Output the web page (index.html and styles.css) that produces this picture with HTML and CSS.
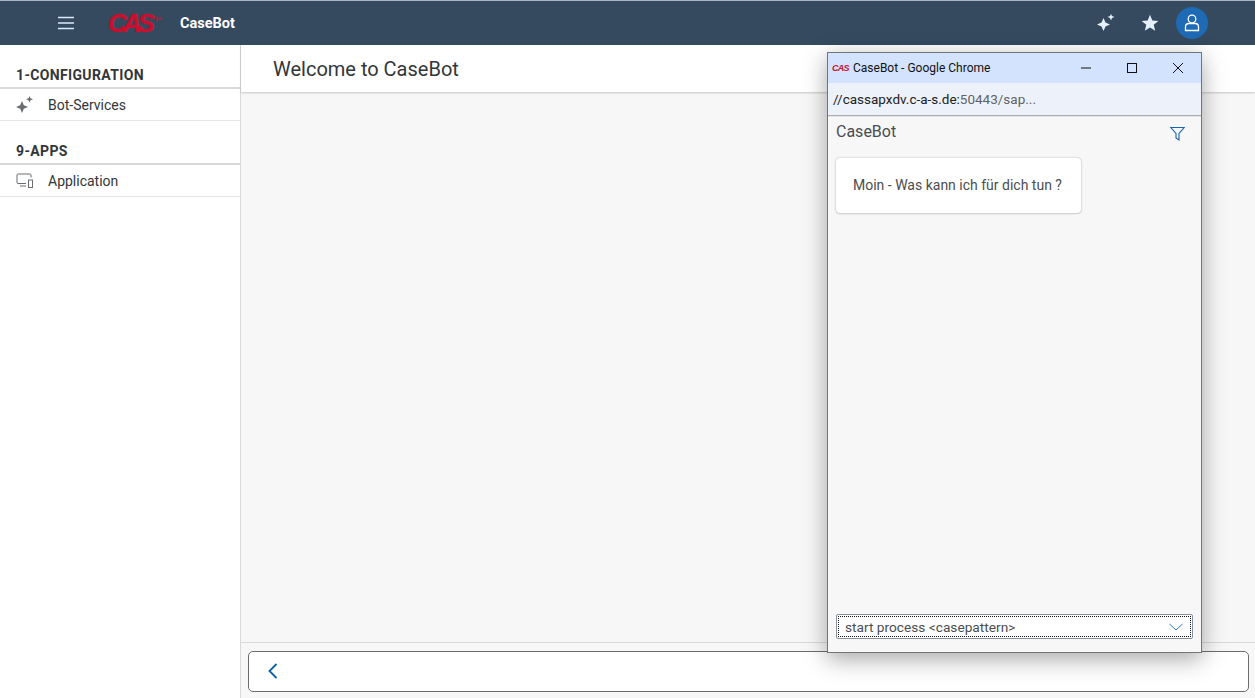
FILE: index.html
```html
<!DOCTYPE html>
<html lang="de">
<head>
<meta charset="utf-8">
<title>CaseBot</title>
<link rel="stylesheet" href="styles.css">
</head>
<body>
<div class="app">
  <header class="shell">
    <div class="shell-left">
      <svg class="burger" width="18" height="14" viewBox="0 0 18 14"><path d="M1 1.500h16M1 7h16M1 12.500h16" stroke="#d9eafa" stroke-width="1.600" fill="none"/></svg>
      <span class="logo">CAS<sup class="logo-sup">go</sup></span>
      <span class="app-title">CaseBot</span>
    </div>
    <div class="shell-right">
      <svg class="spark" width="18" height="18" viewBox="0 0 18 18"><path d="M6.500 4 8.500 8.500 13 10.500 8.500 12.500 6.500 17 4.500 12.500 0 10.500 4.500 8.500Z" fill="#e4f1fd"/><path d="M14 0 15 2 17.500 3 15 4 14 6.500 13 4 10.500 3 13 2Z" fill="#e4f1fd"/></svg>
      <svg class="star" width="18" height="18" viewBox="0 0 18 18"><path d="M9 .8 11.300 6.500 17.400 6.900 12.700 10.800 14.200 16.800 9 13.500 3.800 16.800 5.300 10.800.6 6.900 6.700 6.500Z" fill="#e4f1fd"/></svg>
      <div class="avatar">
        <svg width="16" height="18" viewBox="0 0 16 18"><circle cx="8" cy="5" r="3.800" fill="none" stroke="#fff" stroke-width="1.300"/><path d="M1.500 16.500V13c0-2 1.500-3.500 3.500-3.500h6c2 0 3.500 1.500 3.500 3.500v3.500Z" fill="none" stroke="#fff" stroke-width="1.300"/></svg>
      </div>
    </div>
  </header>
  <div class="body">
    <nav class="side">
      <h2 class="group">1-CONFIGURATION</h2>
      <div class="item">
        <svg class="item-icon" width="18" height="17" viewBox="0 0 18 17"><path d="M6 5 7.800 9.200 12 11 7.800 12.800 6 17 4.200 12.800 0 11 4.200 9.200Z" fill="#6a6d70"/><path d="M13.500 0 14.500 2.200 17 3.200 14.500 4.200 13.500 6.500 12.500 4.200 10 3.200 12.500 2.200Z" fill="#6a6d70"/></svg>
        <span>Bot-Services</span>
      </div>
      <h2 class="group group-next">9-APPS</h2>
      <div class="item">
        <svg class="item-icon" width="18" height="16" viewBox="0 0 18 16"><path d="M10 10.500H2a1 1 0 0 1-1-1V2a1 1 0 0 1 1-1h12a1 1 0 0 1 1 1v2.500M4 13h6" fill="none" stroke="#6a6d70"/><rect x="12.500" y="7" width="4" height="7.500" fill="none" stroke="#6a6d70"/></svg>
        <span>Application</span>
      </div>
    </nav>
    <main class="main">
      <div class="page-head">Welcome to CaseBot</div>
      <div class="page-content"></div>
      <div class="page-foot">
        <div class="foot-bar">
          <svg width="10" height="16" viewBox="0 0 10 16"><path d="M8.500 1 1.500 8 8.500 15" fill="none" stroke="#0a5fa8" stroke-width="1.800"/></svg>
        </div>
      </div>
    </main>
  </div>
</div>

<section class="popup">
  <div class="win-title">
    <span class="win-logo">CAS</span>
    <span class="win-name">CaseBot - Google Chrome</span>
    <div class="win-buttons">
      <svg width="10" height="10" viewBox="0 0 10 10"><path d="M0 5h10" stroke="#111" fill="none"/></svg>
      <svg width="10" height="10" viewBox="0 0 10 10"><rect x=".5" y=".5" width="9" height="9" stroke="#111" fill="none"/></svg>
      <svg width="10" height="10" viewBox="0 0 10 10"><path d="M0 0 10 10M10 0 0 10" stroke="#111" fill="none"/></svg>
    </div>
  </div>
  <div class="win-url"><span class="url-dark">//cassapxdv.c-a-s.de:</span><span class="url-light">50443/sap...</span></div>
  <div class="win-body">
    <div class="bot-head">
      <span>CaseBot</span>
      <svg width="15" height="15" viewBox="0 0 15 15"><path d="M.8 1.500h13.400L9 7.500V14L6 12V7.500Z" fill="none" stroke="#1a64b0" stroke-width="1.100"/></svg>
    </div>
    <div class="bubble">Moin - Was kann ich für dich tun ?</div>
    <div class="spacer"></div>
    <div class="select">
      <div class="select-inner">
        <span>start process &lt;casepattern&gt;</span>
        <svg width="14" height="8" viewBox="0 0 14 8"><path d="M.5 1 7 7 13.500 1" fill="none" stroke="#2a78c4" stroke-width="1"/></svg>
      </div>
    </div>
  </div>
</section>
</body>
</html>
```
FILE: styles.css
```css
* { box-sizing: border-box; }
html, body { margin: 0; height: 100%; }
body { font-family: Roboto, "Noto Sans", sans-serif; color: #32363a; background: #fff; overflow: hidden; }
.app { width: 1255px; height: 698px; display: flex; flex-direction: column; }
.shell { height: 45px; flex: none; background: #354a5f; border-top: 1px solid #a9b4be; display: flex; justify-content: space-between; align-items: center; padding: 0 47px 0 57px; }
.shell-left, .shell-right { display: flex; align-items: center; }
.burger { display: block; }
.logo { margin-left: 33px; width: 47px; font: italic bold 26px/1 "Liberation Sans", sans-serif; letter-spacing: -4px; color: #c8102e; -webkit-text-stroke: .4px #c8102e; white-space: nowrap; }
.logo-sup { font-size: 5px; letter-spacing: 0; vertical-align: 12px; line-height: 0; font-style: normal; -webkit-text-stroke: 0; margin-left: 4px; }
.app-title { margin-left: 25px; font-size: 14.500px; font-weight: 700; color: #fff; }
.spark { margin-right: 26px; }
.star { margin-right: 17px; }
.avatar { width: 32px; height: 32px; border-radius: 50%; background: #1f6ab5; display: flex; align-items: center; justify-content: center; }
.body { flex: 1; display: flex; min-height: 0; }
.side { width: 241px; flex: none; background: #fff; border-right: 1px solid #d9d9d9; }
.group { margin: 0; height: 44px; padding: 21px 16px 0; font-size: 14px; line-height: 18px; font-weight: 700; letter-spacing: .35px; color: #32363a; border-bottom: 2px solid #d9d9d9; }
.group-next { padding-top: 21px; }
.item { height: 32px; display: flex; align-items: center; padding-left: 16px; font-size: 14px; color: #32363a; border-bottom: 1px solid #e5e5e5; }
.item-icon { margin-right: 14px; flex: none; }
.main { flex: 1; display: flex; flex-direction: column; background: #f7f7f7; min-width: 0; }
.page-head { height: 47px; flex: none; background: #fff; padding-left: 32px; font-size: 20px; line-height: 48px; color: #32363a; box-shadow: 0 1px 2px rgba(0,0,0,.2); }
.page-content { flex: 1; }
.page-foot { height: 56px; flex: none; border-top: 1px solid #d9d9d9; padding: 8px 6px 7px 7px; }
.foot-bar { height: 41px; background: #fff; border: 1px solid #6a6d70; border-radius: 5px; display: flex; align-items: center; padding: 0 0 2px 19px; }
.popup { position: absolute; left: 827px; top: 52px; width: 375px; height: 601px; background: #f7f7f7; border: 1px solid #70757a; display: flex; flex-direction: column; box-shadow: 0 6px 22px rgba(0,0,0,.35); }
.win-title { height: 30px; flex: none; background: #d3e3fd; display: flex; align-items: center; padding-left: 4px; font-size: 12px; color: #111; }
.win-logo { width: 21px; font: italic bold 9px/1 "Liberation Sans", sans-serif; letter-spacing: -.8px; color: #c8102e; }
.win-buttons { margin-left: auto; display: flex; gap: 36px; padding-right: 18px; }
.win-url { height: 33px; flex: none; background: #edf2fa; border-bottom: 1px solid #a9adb5; padding-left: 5px; font-size: 13.500px; line-height: 32px; white-space: nowrap; }
.url-dark { color: #202124; }
.url-light { color: #5f6368; }
.win-body { flex: 1; display: flex; flex-direction: column; padding: 0 8px 13px 8px; min-height: 0; border-top: 1px solid #e3e3e3; }
.bot-head { height: 41px; flex: none; display: flex; justify-content: space-between; align-items: flex-start; font-size: 16px; line-height: 30px; color: #4a4d50; padding-right: 8px; }
.bot-head svg { margin-top: 9px; }
.bubble { width: 245px; height: 55px; flex: none; background: #fff; border-radius: 4px; box-shadow: 0 0 2px rgba(0,0,0,.3), 0 1px 2px rgba(0,0,0,.1); padding-left: 17px; font-size: 14px; line-height: 54px; color: #4a4d50; }
.spacer { flex: 1; }
.select { height: 25px; flex: none; background: #fff; border: 1px solid #89919a; border-radius: 2px; padding: 1px; }
.select-inner { height: 100%; border: 1px dotted #111; display: flex; align-items: center; justify-content: space-between; padding: 1px 7px 0 6px; font-size: 13.700px; color: #4a4d50; }
```
